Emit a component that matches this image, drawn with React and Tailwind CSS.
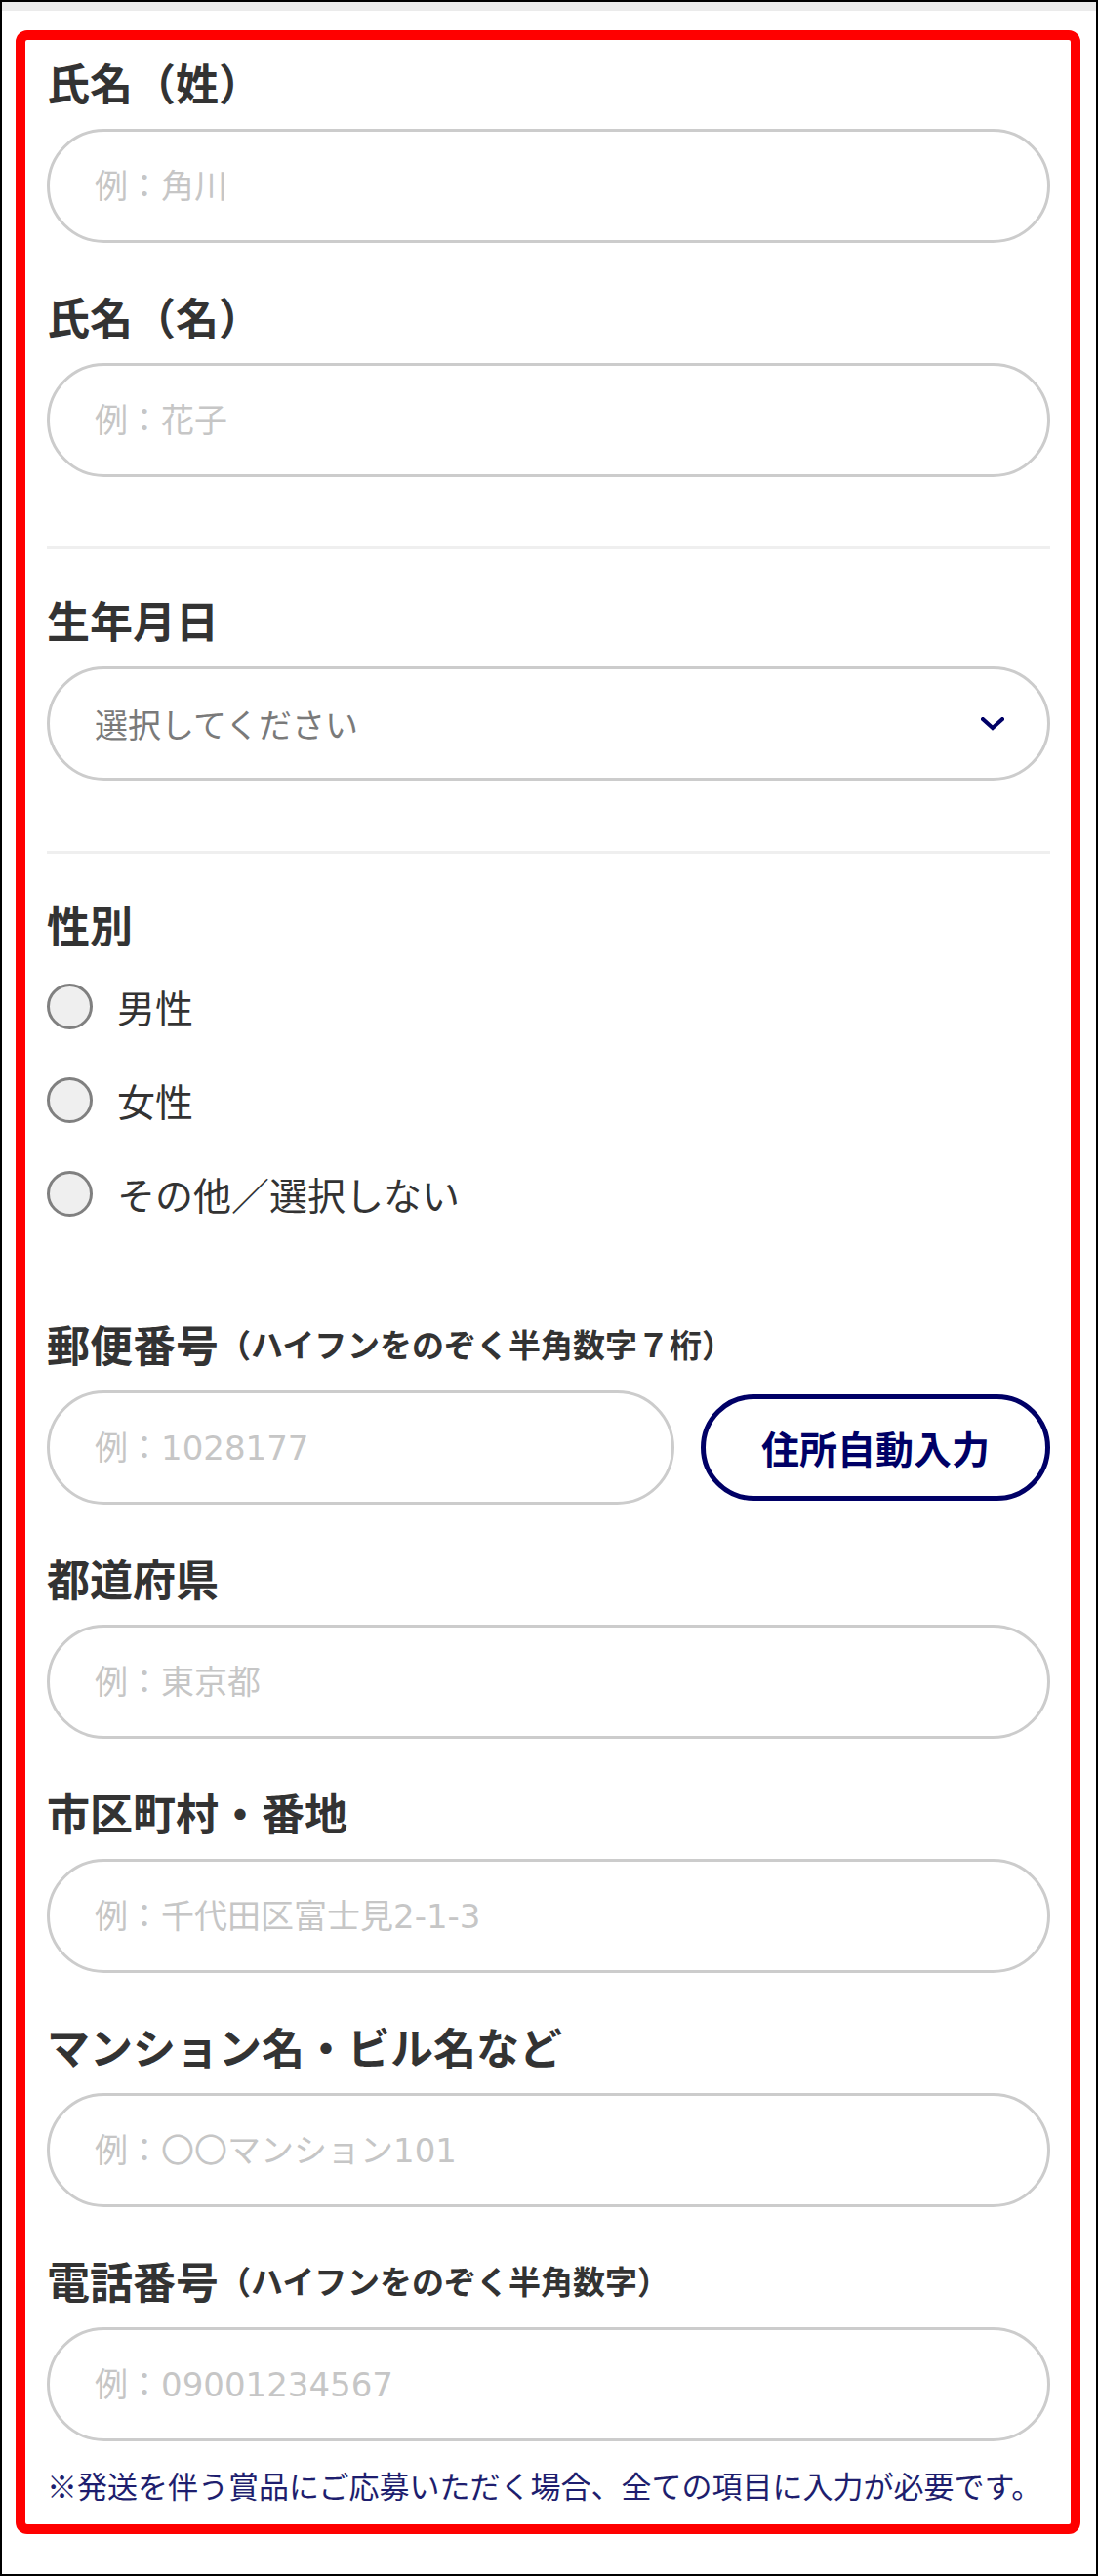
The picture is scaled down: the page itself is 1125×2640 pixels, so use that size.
import React from "react";

const inputClass =
  "block h-[117px] rounded-full border-[3px] border-[#cccccc] bg-white pl-[46px] font-['DejaVu_Sans','Noto_Sans_CJK_JP',sans-serif] text-[34px] text-[#333333] outline-none placeholder:text-[#c6c6c6]";

const Label = ({ text, sub }) => (
  <div className="flex h-[60px] items-center text-[44px] font-bold leading-none text-[#333333]">
    <span>{text}</span>
    {sub && <span className="text-[33px]">{sub}</span>}
  </div>
);

const TextField = ({ label, sub, placeholder, first }) => (
  <div className={first ? "" : "mt-[45px]"}>
    <Label text={label} sub={sub} />
    <input type="text" placeholder={placeholder} className={`mt-[18px] w-full ${inputClass}`} />
  </div>
);

const Radio = ({ label }) => (
  <label className="flex h-[96px] items-center gap-[25px]">
    <span className="block h-[47px] w-[47px] shrink-0 rounded-full border-[3px] border-[#808080] bg-[#efefef]" />
    <span className="text-[39px] leading-none text-[#333333]">{label}</span>
  </label>
);

const App = () => {
  return (
    <div className="box-border h-[2640px] w-[1125px] overflow-hidden border-2 border-black bg-white font-['Noto_Sans_CJK_JP',sans-serif]">
      <div className="h-[9px] bg-[#ebebeb]" />
      <div className="ml-[14px] mr-[16px] mt-[20px] rounded-[12px] border-[10px] border-[#ff0000] bg-white pb-[18px] pl-[22px] pr-[21px] pt-[13px]">
        <TextField first label="氏名（姓）" placeholder="例：角川" />
        <TextField label="氏名（名）" placeholder="例：花子" />

        <div className="mt-[71px] h-[3px] bg-[#efefef]" />

        <div className="mt-[42px]">
          <Label text="生年月日" />
          <div className="mt-[18px] flex h-[117px] w-full items-center justify-between rounded-full border-[3px] border-[#cccccc] bg-white pl-[46px] pr-[44px]">
            <span className="text-[34px] leading-none text-[#7a7a7a]">選択してください</span>
            <svg width="24" height="14" viewBox="0 0 24 14" fill="none">
              <polyline
                points="2,2 12,11 22,2"
                stroke="#000066"
                strokeWidth="4"
                strokeLinecap="square"
                strokeLinejoin="miter"
              />
            </svg>
          </div>
        </div>

        <div className="mt-[72px] h-[3px] bg-[#efefef]" />

        <div className="mt-[42px]">
          <Label text="性別" />
          <div className="mt-[6px] flex flex-col">
            <Radio label="男性" />
            <Radio label="女性" />
            <Radio label="その他／選択しない" />
          </div>
        </div>

        <div className="mt-[76px]">
          <Label text="郵便番号" sub="（ハイフンをのぞく半角数字７桁）" />
          <div className="mt-[18px] flex items-center gap-[27px]">
            <input type="text" placeholder="例：1028177" className={`w-[643px] ${inputClass}`} />
            <button
              type="button"
              className="flex h-[109px] flex-1 items-center justify-center rounded-full border-[5px] border-[#000066] bg-white text-[39px] font-bold leading-none text-[#000066]"
            >
              住所自動入力
            </button>
          </div>
        </div>

        <TextField label="都道府県" placeholder="例：東京都" />
        <TextField label="市区町村・番地" placeholder="例：千代田区富士見2-1-3" />
        <TextField label="マンション名・ビル名など" placeholder="例：〇〇マンション101" />
        <TextField label="電話番号" sub="（ハイフンをのぞく半角数字）" placeholder="例：09001234567" />

        <p className="mt-[22px] flex h-[45px] items-center whitespace-nowrap text-[31px] leading-none text-[#1e1e6e]">
          ※発送を伴う賞品にご応募いただく場合、全ての項目に入力が必要です。
        </p>
      </div>
    </div>
  );
};

export default App;
